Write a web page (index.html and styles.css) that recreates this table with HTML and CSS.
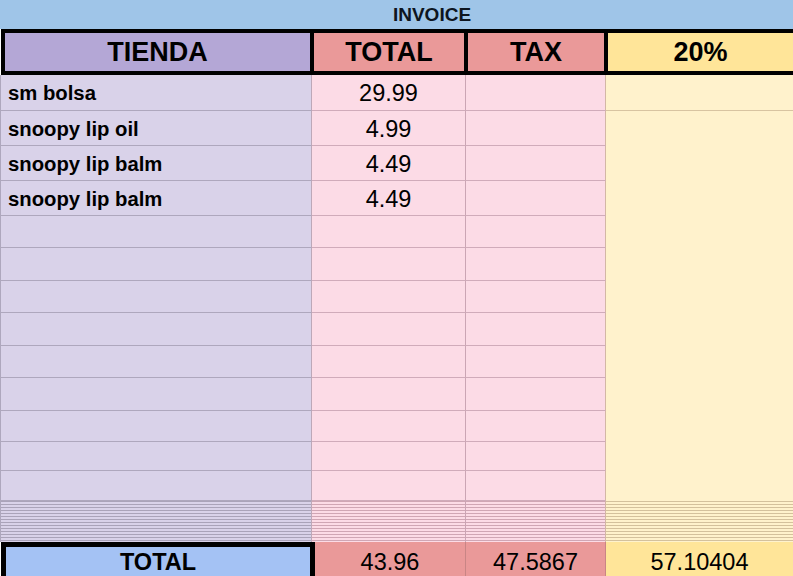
FILE: index.html
```html
<!DOCTYPE html>
<html lang="es">
<head>
<meta charset="utf-8">
<title>Invoice</title>
<link rel="stylesheet" href="styles.css">
</head>
<body>
<div class="sheet">
  <div class="title"><span>INVOICE</span></div>
  <div class="head">
    <div class="hc purple">TIENDA</div>
    <div class="hc red">TOTAL</div>
    <div class="hc red">TAX</div>
    <div class="hc yellow">20%</div>
  </div>
  <div class="grid">
    <div class="c name">sm bolsa</div><div class="c num">29.99</div><div class="c tax"></div><div class="c pct"></div>
    <div class="c name">snoopy lip oil</div><div class="c num">4.99</div><div class="c tax"></div>
    <div class="c name">snoopy lip balm</div><div class="c num">4.49</div><div class="c tax"></div>
    <div class="c name">snoopy lip balm</div><div class="c num">4.49</div><div class="c tax"></div>
    <div class="c name"></div><div class="c num"></div><div class="c tax"></div>
    <div class="c name"></div><div class="c num"></div><div class="c tax"></div>
    <div class="c name"></div><div class="c num"></div><div class="c tax"></div>
    <div class="c name"></div><div class="c num"></div><div class="c tax"></div>
    <div class="c name"></div><div class="c num"></div><div class="c tax"></div>
    <div class="c name"></div><div class="c num"></div><div class="c tax"></div>
    <div class="c name"></div><div class="c num"></div><div class="c tax"></div>
    <div class="c name"></div><div class="c num"></div><div class="c tax"></div>
    <div class="c name"></div><div class="c num"></div><div class="c tax"></div>
    <div class="c pct merged"></div>
  </div>
  <div class="stripes">
    <div class="s s1"></div><div class="s s2"></div><div class="s s3"></div><div class="s s4"></div>
  </div>
  <div class="total">
    <div class="t label">TOTAL</div>
    <div class="t tred">43.96</div>
    <div class="t tred">47.5867</div>
    <div class="t tyellow">57.10404</div>
  </div>
</div>
</body>
</html>
```
FILE: styles.css
```css
html, body {
  margin: 0;
  padding: 0;
  background: #ffffff;
  overflow: hidden;
}
body {
  width: 793px;
  height: 576px;
  font-family: "Liberation Sans", Arial, sans-serif;
  color: #000;
}
.sheet {
  width: 793px;
  height: 576px;
  overflow: hidden;
}
.title {
  height: 29px;
  box-sizing: border-box;
  padding-left: 71px;
  background: #9fc5e8;
  display: flex;
  align-items: center;
  justify-content: center;
  font-weight: bold;
  font-size: 19px;
  color: #0d1520;
}
.head {
  margin-left: 1px;
  background: #000;
  padding: 4px 0 4px 4px;
  display: grid;
  grid-template-columns: 305px 150px 136px 1fr;
  column-gap: 4px;
}
.hc {
  height: 38px;
  display: flex;
  align-items: center;
  justify-content: center;
  font-weight: bold;
  font-size: 27px;
  padding-top: 1px;
  box-sizing: border-box;
}
.purple { background: #b4a7d6; }
.red { background: #ea9999; }
.yellow { background: #ffe599; }

.grid {
  display: grid;
  grid-template-columns: 312px 154px 140px 1fr;
  grid-template-rows: 36px 35px 35px 35px 32px 33px 32px 33px 32px 33px 31px 29px 30px;
}
.c {
  box-sizing: border-box;
  border-right: 1px solid;
  border-bottom: 1px solid;
  display: flex;
  align-items: center;
}
.name {
  background: #d9d2e9;
  border-left: 1px solid #aea7bd;
  border-bottom-color: #aea7bd;
  border-right-color: #bda8b8;
  padding-left: 7px;
  padding-top: 2px;
  font-weight: bold;
  font-size: 20.3px;
}
.num {
  background: #fcdbe6;
  border-bottom-color: #d0abba;
  border-right-color: #cba5b4;
  justify-content: center;
  font-size: 23.5px;
  padding-top: 2px;
}
.tax {
  background: #fcdbe6;
  border-bottom-color: #d0abba;
  border-right-color: #d3b7a5;
}
.pct {
  background: #fff2cc;
  border-bottom-color: #d8c4a1;
  border-right: none;
}
.merged {
  grid-column: 4;
  grid-row: 2 / 14;
  border-bottom: none;
}

.stripes {
  display: grid;
  height: 41px;
  grid-template-columns: 312px 154px 140px 1fr;
}
.s {
  box-sizing: border-box;
  border-right: 1px solid;
}
.s1 {
  border-left: 1px solid #aea7bd;
  border-right-color: #bda8b8;
  background: repeating-linear-gradient(to bottom, #aaa3b9 0, #aaa3b9 1px, #d9d2e9 1px, #d9d2e9 3px);
}
.s2 {
  border-right-color: #cba5b4;
  background: repeating-linear-gradient(to bottom, #d0a6b4 0, #d0a6b4 1px, #fcdbe6 1px, #fcdbe6 3px);
}
.s3 {
  border-right-color: #d3b7a5;
  background: repeating-linear-gradient(to bottom, #d0a6b4 0, #d0a6b4 1px, #fcdbe6 1px, #fcdbe6 3px);
}
.s4 {
  border-right: none;
  background: repeating-linear-gradient(to bottom, #d4c19c 0, #d4c19c 1px, #fff2cc 1px, #fff2cc 3px);
}

.total {
  display: grid;
  margin-left: 1px;
  height: 40px;
  grid-template-columns: 314px 151px 140px 1fr;
}
.t {
  box-sizing: border-box;
  display: flex;
  align-items: center;
  justify-content: center;
  font-size: 23.5px;
}
.label {
  background: #a4c2f4;
  border: 5px solid #000;
  font-weight: bold;
}
.tred {
  background: #ea9999;
  border-right: 1px solid #c98585;
}
.tyellow {
  background: #ffe599;
}
```
